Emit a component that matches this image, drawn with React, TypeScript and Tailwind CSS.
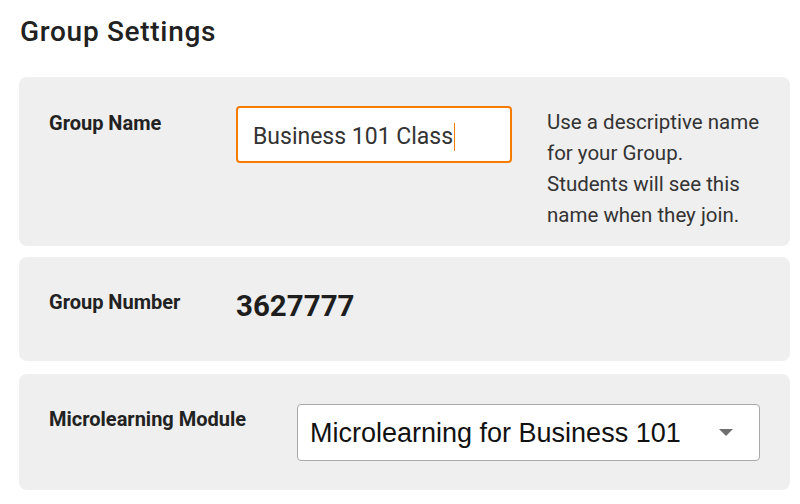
export default function App() {
  return (
    <div className="min-h-screen bg-white pl-[19px] pr-[10px] pt-[13px] text-[#222]" style={{ fontFamily: "Roboto, 'Liberation Sans', sans-serif" }}>
      <h1 className="mb-[26px] pl-px text-[28px] font-medium leading-[38px] tracking-[0.7px] text-[#212121]">Group Settings</h1>

      <div className="flex flex-col gap-[11px]">
        <section className="flex h-[169px] items-start rounded-[8px] bg-[#efefef] pl-[30px] pt-[29px]">
          <div className="mt-[3px] w-[187px] text-[20px] font-bold leading-[28px] text-[#222]">Group Name</div>
          <div className="flex h-[57px] w-[276px] items-center rounded-[4px] border-2 border-[#f57c00] bg-white pl-[15px] pt-[4px]">
            <span className="text-[23px] leading-none text-[#333]">Business 101 Class</span>
            <span className="ml-px h-[28px] w-px bg-[#f57c00]" />
          </div>
          <p className="ml-[35px] mt-[1px] w-[218px] text-[20.5px] leading-[31px] text-[#333]">
            Use a descriptive name for your Group. Students will see this name when they join.
          </p>
        </section>

        <section className="flex h-[104px] items-start rounded-[8px] bg-[#efefef] pl-[30px] pt-[31px]">
          <div className="w-[187px] text-[20px] font-bold leading-[28px] text-[#222]">Group Number</div>
          <div className="mt-[2px] text-[29.5px] font-bold leading-[32px] text-[#1e1e1e]">3627777</div>
        </section>

        <section className="mt-[2px] flex h-[116px] items-start rounded-[8px] bg-[#efefef] pl-[30px] pt-[30px]">
          <div className="mt-[1px] w-[248px] text-[20px] font-bold leading-[28px] text-[#222]">Microlearning Module</div>
          <div className="flex h-[57px] w-[463px] items-center justify-between rounded-[4px] border border-[#a9a9a9] bg-white pl-[12px] pr-[26px]">
            <span className="pt-[1px] text-[27px] leading-none text-[#111]" style={{ fontFamily: "'Liberation Sans', Arial, sans-serif" }}>
              Microlearning for Business 101
            </span>
            <svg width="14" height="8" viewBox="0 0 14 8" className="mt-[1px]">
              <path d="M0 0 L14 0 L7 7 Z" fill="#6f6f6f" />
            </svg>
          </div>
        </section>
      </div>
    </div>
  );
}
